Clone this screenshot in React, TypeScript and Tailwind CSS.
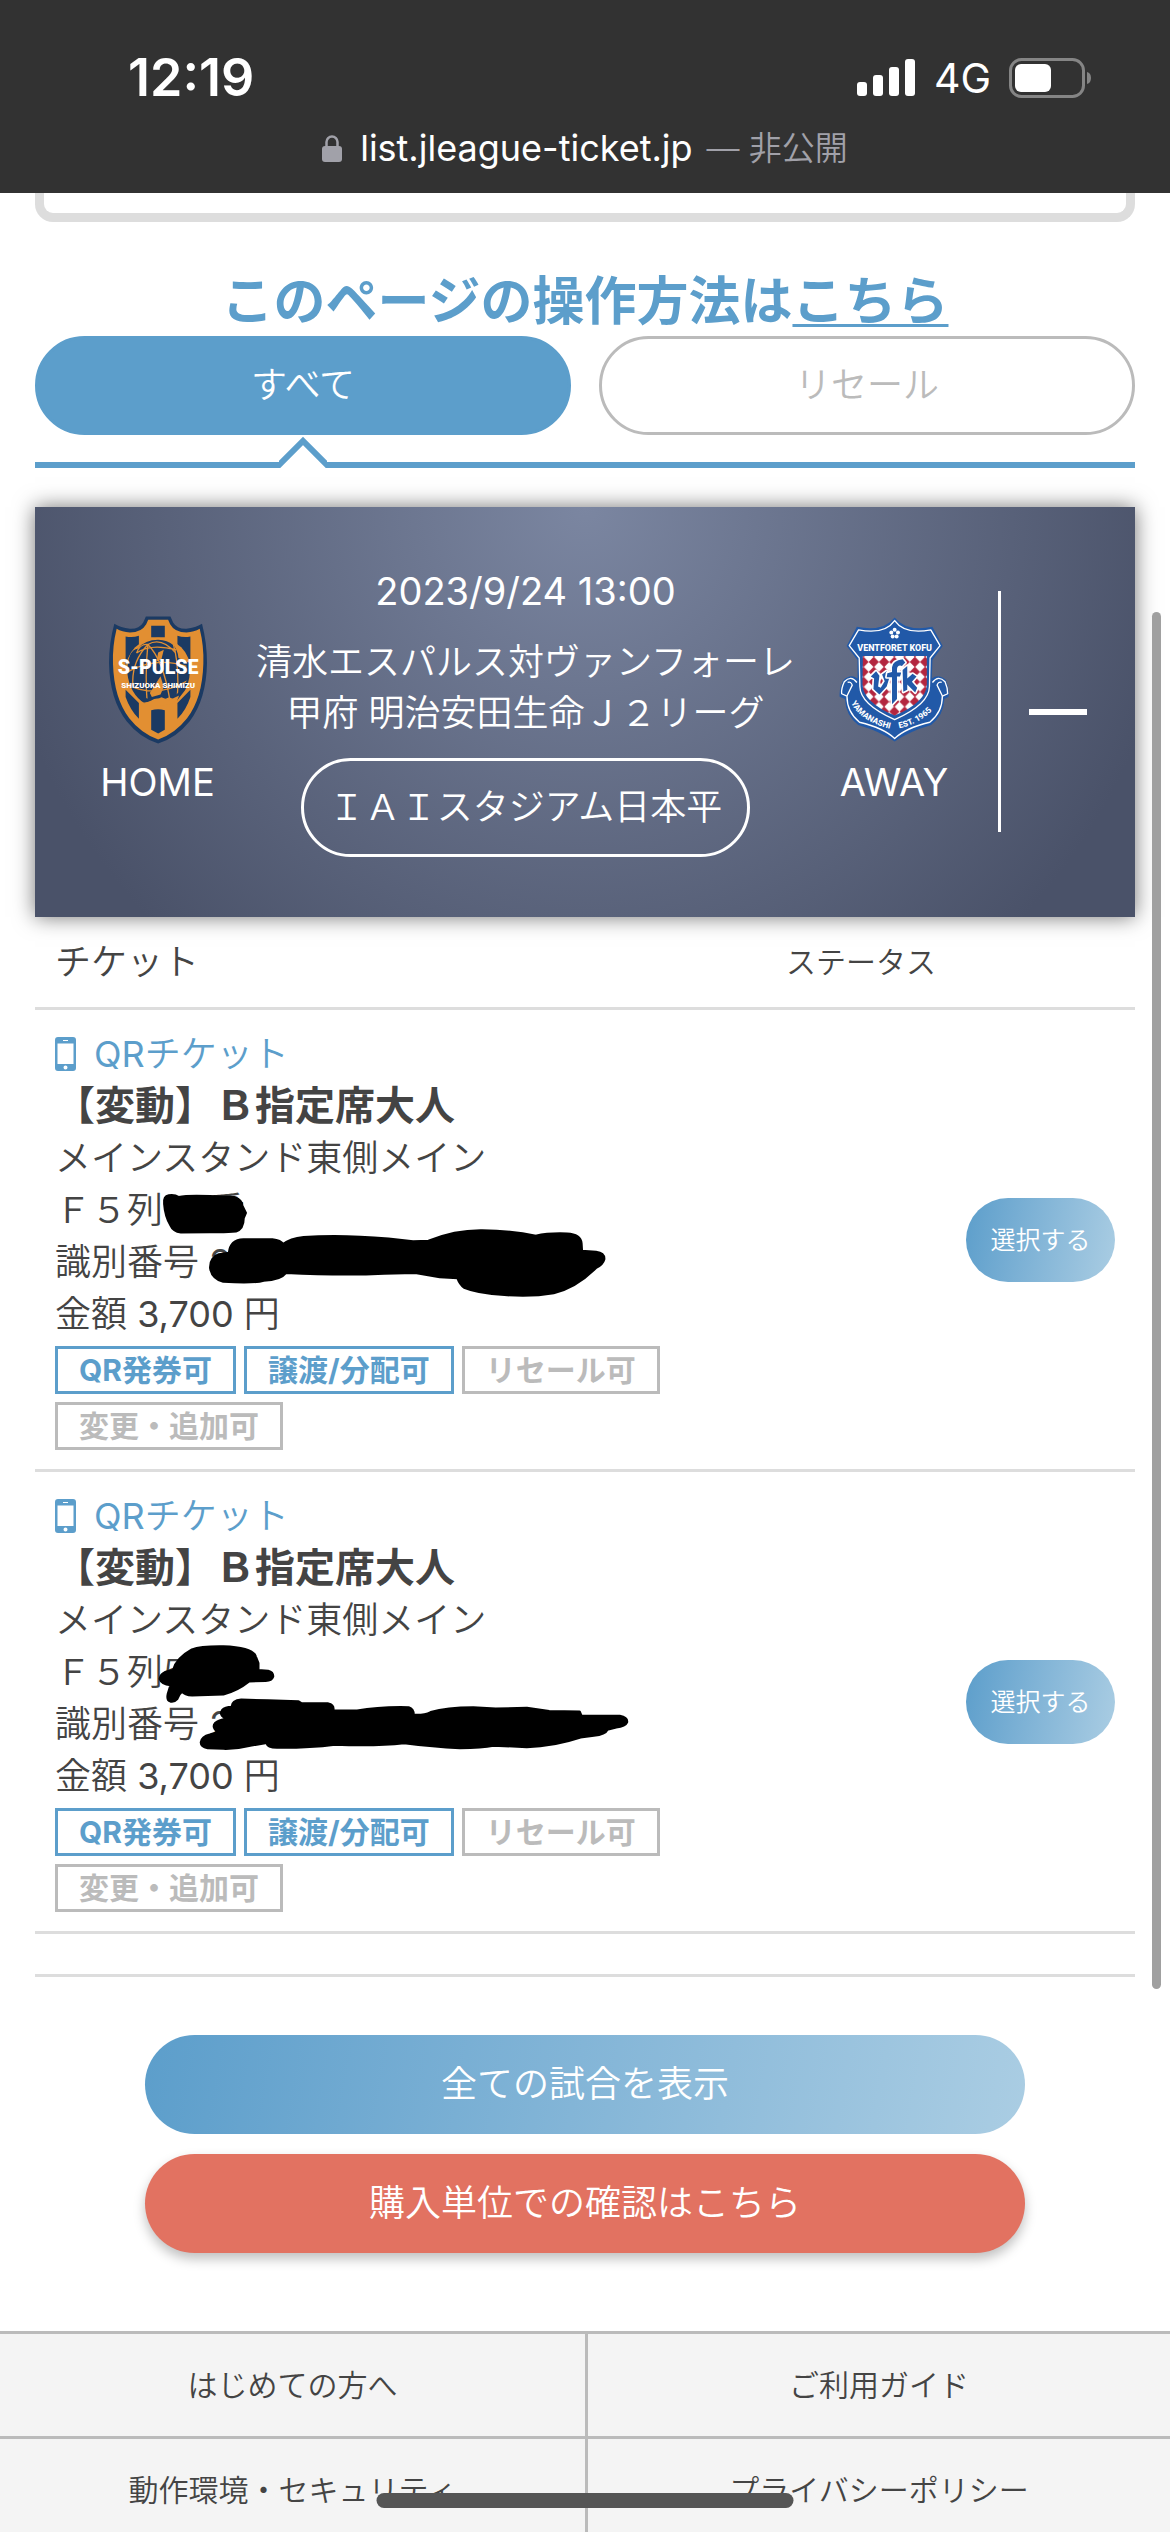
import React from "react";

type Tag = { label: string; active: boolean };

type Ticket = {
  id: string;
  seat: React.ReactNode;
  redaction: { viewBox: string; paths: string[] };
};

const tags: Tag[] = [
  { label: "QR発券可", active: true },
  { label: "譲渡/分配可", active: true },
  { label: "リセール可", active: false },
  { label: "変更・追加可", active: false },
];

const tickets: Ticket[] = [
  {
    id: "ticket-1",
    seat: (
      <>
        Ｆ５列<span className="inline-block w-[46px]" />番
      </>
    ),
    redaction: {
      viewBox: "78 252 1490 1316",
      paths: [
        "M368 795Q366 774 378 771Q390 768 400 776Q420 770 470 773L525 776Q542 784 542 800L550 820L545 835Q545 865 528 872Q510 875 470 874L405 875Q388 872 382 855Q370 830 368 795Z",
        "M471 975Q470 945 490 936L513 932Q516 895 545 894L610 894Q628 896 634 908Q650 892 680 888Q760 880 870 892L925 900L960 898Q1020 868 1080 869Q1150 870 1200 884Q1230 876 1270 878Q1300 880 1302 905L1303 926L1335 929Q1354 932 1353 950Q1350 965 1335 974Q1290 1030 1240 1045Q1190 1056 1130 1050Q1070 1046 1040 1030Q1030 1020 1025 1003L985 1000L930 988L860 990Q770 996 640 988Q628 1008 590 1010Q570 1018 500 1013Q475 1005 471 975Z",
      ],
    },
  },
  {
    id: "ticket-2",
    seat: <>Ｆ５列5</>,
    redaction: {
      viewBox: "78 35 1490 1365",
      paths: [
        "M358 636Q360 614 388 610Q395 575 430 550Q450 540 500 541Q565 544 572 570L578 590L578 610L600 612Q612 616 611 630Q608 642 595 642L558 643Q530 672 500 681L430 684Q414 684 408 672Q400 680 396 695Q390 704 382 702Q373 698 376 680L382 654Q362 652 358 636Z",
        "M450 820Q452 802 470 797L488 790Q474 776 482 764Q490 755 506 752Q490 740 498 726Q504 718 519 717Q520 698 540 696L600 698L668 701L675 707L735 707Q748 710 746 727L800 728Q850 716 915 718Q926 722 926 740Q950 742 965 732Q1000 718 1060 718L1110 722L1180 720L1230 729L1298 731L1302 743L1388 743Q1406 748 1404 762Q1400 774 1380 777L1360 784Q1355 798 1330 801L1300 806Q1240 832 1180 834L1105 830Q1080 836 1030 837Q970 834 905 823Q840 832 750 827Q690 837 620 836Q600 836 597 822L560 830Q530 840 500 839L465 837Q450 834 450 820Z",
      ],
    },
  },
];

function StatusBar() {
  return (
    <header className="h-[193px] bg-[#323232] text-white">
      <div className="flex h-[116px] items-end justify-between pr-[78px] pl-[128px]">
        <time className="text-[52px] leading-[76px] font-semibold">12:19</time>
        <div className="flex h-[76px] items-center">
          <svg className="h-[38px] w-[59px]" viewBox="0 0 59 38" fill="#fff" aria-label="電波">
            <rect x="0" y="23" width="10" height="14" rx="3" />
            <rect x="16" y="16" width="10" height="21" rx="3" />
            <rect x="32" y="8" width="10" height="29" rx="3" />
            <rect x="48" y="0" width="10" height="37" rx="3" />
          </svg>
          <span className="mx-[18px] text-[41px] leading-[76px]">4G</span>
          <svg className="h-10 w-[83px]" viewBox="0 0 83 40" aria-label="バッテリー">
            <rect x="1.5" y="1.5" width="73" height="37" rx="11" fill="none" stroke="#858585" strokeWidth="3" />
            <rect x="6" y="6" width="36" height="28" rx="6" fill="#fff" />
            <path d="M78 14Q82 15 82 20T78 26Z" fill="#858585" />
          </svg>
        </div>
      </div>
      <div className="flex items-center justify-center leading-[64px]">
        <svg className="mr-[18px] h-7 w-5" viewBox="0 0 20 28" aria-hidden="true">
          <path d="M4.5 13V8a5.500 5.500 0 0 1 11 0v5" fill="none" stroke="#a1a1a9" strokeWidth="2.500" />
          <rect x="0" y="12" width="20" height="16" rx="3" fill="#a1a1a9" />
        </svg>
        <span className="text-[36px]">list.jleague-ticket.jp</span>
        <span className="ml-[14px] text-[33px] font-[350] text-[#a1a1a9]">— 非公開</span>
      </div>
    </header>
  );
}

function SPulseCrest() {
  return (
    <svg className="h-32 w-[98px]" viewBox="57 50 295 382" aria-label="清水エスパルス">
      <defs>
        <clipPath id="globe">
          <circle cx="205" cy="212" r="91" />
        </clipPath>
      </defs>
      <path
        d="M168 50H242L250 68Q262 88 290 87Q318 84 337 72Q352 130 352 190Q350 300 300 365Q260 415 205 432Q150 415 110 365Q59 300 57 190Q57 130 73 72Q92 84 120 87Q148 88 160 68Z"
        fill="#1b3a63"
      />
      <path
        d="M175 60H235L241 73Q255 98 290 98Q314 97 330 87Q343 140 341 192Q338 296 292 356Q256 402 205 420Q154 402 118 356Q72 296 69 192Q67 140 80 87Q96 97 120 98Q155 98 169 73Z"
        fill="#e28f32"
      />
      <path
        d="M184 78H225V112H184ZM107 110Q128 114 147 108V160L107 200ZM263 108Q282 114 302 110V200L263 160ZM107 270L147 310V358Q120 330 107 292ZM302 270L263 310V358Q290 330 302 292ZM184 332Q205 326 225 332V391L205 402L184 391Z"
        fill="#1b3a63"
      />
      <circle cx="205" cy="212" r="98" fill="#e28f32" />
      <path
        d="M205 120Q262 122 266 175L300 190Q304 240 286 272L262 303L238 293L222 300Q196 292 186 302L165 312Q120 284 112 220Q112 150 145 146Q165 120 205 120Z"
        fill="#1b3a63"
      />
      <g clipPath="url(#globe)" fill="none" stroke="#e28f32" strokeWidth="4">
        <path d="M174 134Q215 110 258 160M174 134Q120 190 130 270M174 134Q165 220 172 310M174 134Q220 180 240 300M174 134Q150 130 140 160M140 160Q180 130 260 150M116 215Q200 170 290 200M112 255Q200 300 300 240M125 280Q190 320 270 300M250 130Q270 200 262 300" />
      </g>
      <path
        d="M205 158L222 150L215 178L200 185ZM196 255L212 230L222 262L212 285L186 292L180 280ZM155 310L190 304L215 293L238 302L268 288L262 304Q210 330 155 310Z"
        fill="#e28f32"
      />
      <g fill="#fff" textAnchor="middle" className="font-[Roboto]" fontWeight="900">
        <text x="205" y="224" fontSize="59">S-PULSE</text>
        <text x="205" y="265" fontSize="24">SHIZUOKA SHIMIZU</text>
      </g>
    </svg>
  );
}

function VentforetCrest() {
  return (
    <svg className="h-[125px] w-[110px]" viewBox="40 54 332 374" aria-label="ヴァンフォーレ甲府">
      <defs>
        <pattern id="diamonds" width="31" height="30" patternUnits="userSpaceOnUse" x="114" y="173">
          <rect width="31" height="30" fill="#fff" />
          <path d="M0 -1L15.500 15L0 31L-15.500 15ZM31 -1L46.500 15L31 31L15.500 15Z" fill="#b3263f" />
        </pattern>
        <path id="ribbon-left" d="M76 312Q110 372 204 392" />
        <path id="ribbon-right" d="M222 388Q290 374 336 318" />
      </defs>
      <path
        d="M208 54Q242 98 322 82L353 140L322 182L320 238Q340 222 362 242Q374 270 371 293L358 300Q356 350 318 378Q250 398 208 428Q166 398 98 378Q60 350 58 300L42 293Q40 265 54 242Q76 222 96 238L96 182L63 140L94 82Q174 98 208 54Z"
        fill="#2159a8"
      />
      <g fill="none" stroke="#fff" strokeWidth="4" strokeLinejoin="round">
        <path d="M208 63Q238 106 317 91L345 139L315 176L313 262Q312 316 208 362Q104 316 103 262L101 176L71 139L99 91Q178 106 208 63Z" />
        <path d="M94 250Q76 226 56 248Q46 270 48 284L64 291Q64 340 102 370Q176 388 208 419Q240 388 314 370Q352 340 352 291L368 284Q368 266 360 248Q340 226 322 250" />
        <path d="M64 291L80 258Q76 246 66 250M352 291L336 258Q340 246 350 250" />
      </g>
      <path d="M112 170H305V255Q304 308 208 350Q112 308 111 255Z" fill="url(#diamonds)" />
      <g fill="#fff">
        <circle cx="208" cy="91" r="6" />
        <circle cx="218" cy="99" r="6" />
        <circle cx="214" cy="111" r="6" />
        <circle cx="202" cy="111" r="6" />
        <circle cx="198" cy="99" r="6" />
        <circle cx="208" cy="102" r="4" fill="#2159a8" />
      </g>
      <g stroke="#fff" strokeWidth="10" fill="#2159a8" paintOrder="stroke" strokeLinejoin="round">
        <path d="M136 232L152 216L162 230L158 262L166 266L178 246L170 226L184 216L192 236L184 262L162 286L144 270L146 238Z" />
        <path d="M186 222L200 218V204Q202 184 232 180L240 190L230 200Q216 196 215 210V220H228L224 232H215V300L200 316V234H184Z" />
        <path d="M232 212L246 200V238L262 224L274 232L260 248L276 266L270 280L246 256V272L234 278Z" />
      </g>
      <g fill="#fff" fontWeight="800" className="font-[Roboto]">
        <text x="208" y="155" fontSize="27" textAnchor="middle">VENTFORET KOFU</text>
        <text fontSize="25">
          <textPath href="#ribbon-left">YAMANASHI</textPath>
        </text>
        <text fontSize="25">
          <textPath href="#ribbon-right">EST. 1965</textPath>
        </text>
      </g>
    </svg>
  );
}

function Tabs() {
  return (
    <nav aria-label="表示切替">
      <div className="grid grid-cols-2 gap-7 text-[36px] leading-[93px]">
        <button className="rounded-full border-3 border-[#5c9ecb] bg-[#5c9ecb] font-[350] text-white">すべて</button>
        <button className="rounded-full border-3 border-[#bbb] font-[350] text-[#bbb]">リセール</button>
      </div>
      <div className="mt-[1px] flex items-end">
        <div className="h-[6px] w-[244px] bg-[#5c9ecb]" />
        <svg className="h-8 w-12" viewBox="0 0 48 32" fill="none" stroke="#5c9ecb" strokeWidth="6" aria-hidden="true">
          <path d="M-3 32L24 5L51 32" />
        </svg>
        <div className="h-[6px] flex-1 bg-[#5c9ecb]" />
      </div>
    </nav>
  );
}

function MatchCard() {
  return (
    <section className="mt-[39px] grid grid-cols-[185fr_551fr_197fr_117fr] items-center bg-[radial-gradient(circle_at_top,#7b86a1_0%,#4a5269_600px)] pt-[59px] pr-5 pb-[60px] pl-[30px] text-center text-white shadow-[0_0_20px_rgba(0,0,0,0.55)]">
      <div className="flex flex-col items-center">
        <SPulseCrest />
        <span className="mt-[13px] text-[38px] leading-[50px]">HOME</span>
      </div>
      <div className="flex flex-col items-center">
        <time className="text-[38px] leading-[51px]">2023/9/24 13:00</time>
        <h2 className="mt-5 text-[36px] leading-[51px] font-[350]">
          清水エスパルス対ヴァンフォーレ甲府 明治安田生命Ｊ２リーグ
        </h2>
        <p className="mt-[19px] rounded-full border-3 border-white px-[25px] text-[36px] leading-[93px] font-[350] whitespace-nowrap">
          ＩＡＩスタジアム日本平
        </p>
      </div>
      <div className="flex flex-col items-center pr-[11px]">
        <VentforetCrest />
        <span className="mt-[15px] text-[38px] leading-[50px]">AWAY</span>
      </div>
      <div className="flex h-[241px] items-center justify-center border-l-3 border-white">
        <button aria-label="閉じる" className="flex h-[60px] w-[60px] items-center justify-center">
          <span className="h-[6px] w-[58px] bg-white" />
        </button>
      </div>
    </section>
  );
}

function TicketRow({ ticket }: { ticket: Ticket }) {
  return (
    <tr className="border-b-3 border-[#ddd]">
      <td className="relative pt-[18px] pr-5 pb-[19px] pl-5 text-[36px] leading-[52px] font-[350]">
        <p className="flex items-center text-[#5c9ecb]">
          <svg className="mr-[18px] h-[34px] w-[21px]" viewBox="0 0 21 34" aria-hidden="true">
            <path
              fillRule="evenodd"
              fill="#5c9ecb"
              d="M3 0H18Q21 0 21 3V31Q21 34 18 34H3Q0 34 0 31V3Q0 0 3 0ZM2.500 6.500V27H18.500V6.500ZM8 3V4H13V3ZM10.500 28.500A2 2 0 1 0 10.500 32.500A2 2 0 1 0 10.500 28.500Z"
            />
          </svg>
          <span>
            <span className="font-normal">QR</span>チケット
          </span>
        </p>
        <p className="text-[40px] font-bold">【変動】Ｂ指定席大人</p>
        <p>メインスタンド東側メイン</p>
        <p>{ticket.seat}</p>
        <p>
          識別番号 <span className="font-normal">2</span>
        </p>
        <p>
          金額 <span className="font-normal">3,700</span> 円
        </p>
        <ul className="mt-[6px] flex flex-wrap gap-2 text-[30px] leading-[42px] font-bold">
          {tags.map((tag) => (
            <li
              key={tag.label}
              className={
                tag.active
                  ? "border-3 border-[#5c9ecb] px-[21px] text-[#5c9ecb]"
                  : "border-3 border-[#bbb] px-[21px] text-[#bbb]"
              }
            >
              {tag.label}
            </li>
          ))}
        </ul>
        <svg
          className="absolute top-0 left-0 h-[470px] w-[665px]"
          viewBox={ticket.redaction.viewBox}
          preserveAspectRatio="none"
          stroke="#000"
          strokeWidth="6"
          strokeLinejoin="round"
          aria-hidden="true"
        >
          {ticket.redaction.paths.map((d) => (
            <path key={d} d={d} />
          ))}
        </svg>
      </td>
      <td />
      <td>
        <button className="w-[149px] rounded-full bg-linear-100 from-[#5c9ecb] to-[#aacde3] text-[25px] leading-[84px] font-[350] text-white">
          選択する
        </button>
      </td>
    </tr>
  );
}

function TicketTable() {
  return (
    <table className="w-full table-fixed border-collapse text-left text-[#444]">
      <thead>
        <tr className="border-b-3 border-[#ddd] leading-[90px]">
          <th className="pl-5 text-[36px] font-[350]">チケット</th>
          <th className="w-[210px] text-center text-[30px] font-[350]">ステータス</th>
          <th className="w-[169px]" aria-label="操作" />
        </tr>
      </thead>
      <tbody>
        {tickets.map((ticket) => (
          <TicketRow key={ticket.id} ticket={ticket} />
        ))}
        <tr className="border-b-3 border-[#ddd]">
          <td colSpan={3} className="h-[43px]" />
        </tr>
      </tbody>
    </table>
  );
}

function Footer() {
  const links = ["はじめての方へ", "ご利用ガイド", "動作環境・セキュリティ", "プライバシーポリシー"];
  return (
    <footer className="mt-[78px] grid grid-cols-2 bg-[#f4f4f4] text-center text-[30px] leading-[102px] font-[350] text-[#444]">
      {links.map((label) => (
        <a key={label} href="#" className="border-t-3 border-[#bbb] even:border-l-3">
          {label}
        </a>
      ))}
    </footer>
  );
}

export default function App() {
  return (
    <div className="relative h-screen overflow-hidden bg-white font-[Inter,'Noto_Sans_CJK_JP',sans-serif]" lang="ja">
      <StatusBar />
      <main className="px-[35px]">
        <div className="h-[29px] rounded-b-[18px] border-9 border-t-0 border-[#ddd]" />
        <h1 className="mt-12 mb-[2px] text-center text-[52px] leading-[64px] font-bold text-[#5c9ecb]">
          このページの操作方法は
          <a href="#" className="underline decoration-3 underline-offset-4">
            こちら
          </a>
        </h1>
        <Tabs />
        <MatchCard />
        <TicketTable />
        <div className="mx-auto mt-[58px] flex w-4/5 flex-col gap-5 text-[36px] leading-[99px] font-[350] text-white">
          <button className="rounded-full bg-linear-100 from-[#5c9ecb] to-[#aacde3]">全ての試合を表示</button>
          <button className="rounded-full bg-[#e27261] shadow-[0_6px_12px_rgba(0,0,0,0.25)]">
            購入単位での確認はこちら
          </button>
        </div>
      </main>
      <Footer />
      <div className="absolute top-[612px] right-[9px] h-[1377px] w-[9px] rounded-full bg-[#a0a0a0]" />
      <div className="absolute bottom-6 left-1/2 h-[15px] w-[417px] -translate-x-1/2 rounded-full bg-[#555]" />
    </div>
  );
}
